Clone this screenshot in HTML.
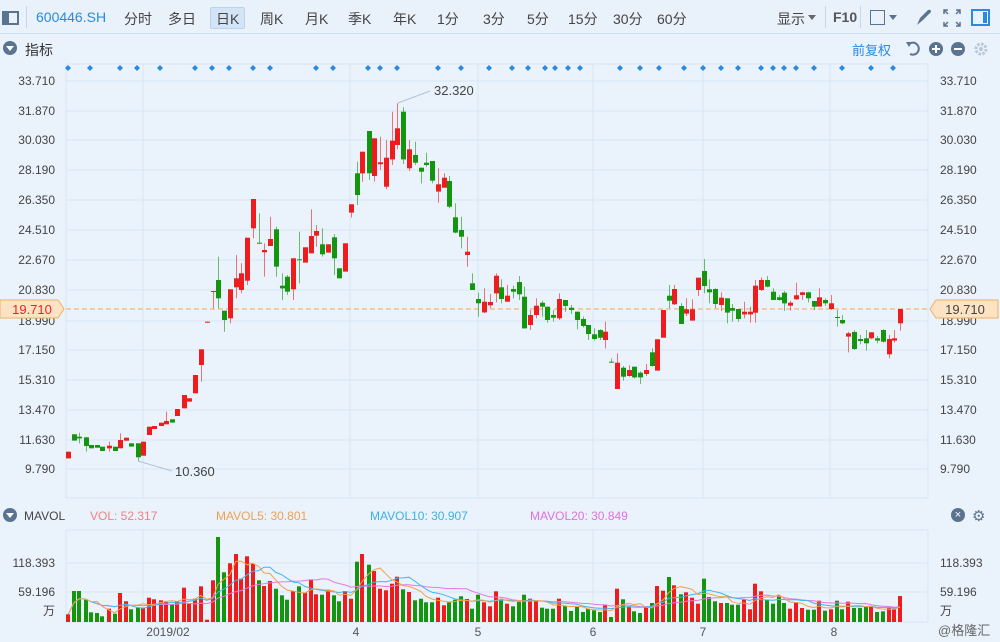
<!DOCTYPE html>
<html><head><meta charset="utf-8"><style>
*{margin:0;padding:0;box-sizing:border-box}
body{width:1000px;height:642px;overflow:hidden;background:#eaf2fc;font-family:"Liberation Sans","Noto Sans CJK SC",sans-serif;position:relative}
.tb{position:absolute;left:0;top:0;width:1000px;height:34px;background:#e9f1fb;border-bottom:1px solid #cfdeef}
.t{position:absolute;top:9px;font-size:14px;color:#444}
.s{position:absolute;font-size:12px;color:#444}
</style></head><body>
<div class="tb">
<div style="position:absolute;left:2px;top:11px;width:17px;height:14px;border:2px solid #5a7390;"><div style="width:5px;height:100%;background:#5a7390"></div></div>
<div style="position:absolute;left:26px;top:6px;width:1px;height:22px;background:#c8d6e6"></div>
<div class="t" style="left:36px;color:#2a8ae0">600446.SH</div>
<div class="t" style="left:124px">分时</div>
<div class="t" style="left:168px">多日</div>
<div style="position:absolute;left:210px;top:7px;width:35px;height:22px;background:#d3e4f6;border:1px solid #bcd2ea;border-radius:2px"></div>
<div class="t" style="left:216px">日K</div>
<div class="t" style="left:260px">周K</div>
<div class="t" style="left:305px">月K</div>
<div class="t" style="left:348px">季K</div>
<div class="t" style="left:393px">年K</div>
<div class="t" style="left:437px">1分</div>
<div class="t" style="left:483px">3分</div>
<div class="t" style="left:527px">5分</div>
<div class="t" style="left:568px">15分</div>
<div class="t" style="left:613px">30分</div>
<div class="t" style="left:657px">60分</div>
<div class="t" style="left:777px">显示</div>
<div style="position:absolute;left:808px;top:15px;border:4px solid transparent;border-top:5px solid #666"></div>
<div style="position:absolute;left:825px;top:6px;width:1px;height:22px;background:#c8d6e6"></div>
<div class="t" style="left:833px;font-weight:bold;color:#555">F10</div>
<div style="position:absolute;left:860px;top:6px;width:1px;height:22px;background:#c8d6e6"></div>
<div style="position:absolute;left:870px;top:10px;width:15px;height:15px;border:1px solid #5a7390"></div>
<div style="position:absolute;left:889px;top:15px;border:4px solid transparent;border-top:5px solid #5a7390"></div>
<svg style="position:absolute;left:915px;top:8px" width="18" height="18"><path d="M2 17 L5 10 L13 2 Q16 1 16 4 L8 12 Z" fill="#5a7390"/></svg>
<svg style="position:absolute;left:943px;top:9px" width="18" height="18" fill="none" stroke="#5a7390" stroke-width="1.5"><path d="M1 5V1H5M13 1H17V5M17 13V17H13M5 17H1V13M1 1L5 5M17 1L13 5M17 17L13 13M1 17L5 13"/></svg>
<div style="position:absolute;left:971px;top:9px;width:19px;height:17px;border:2px solid #2a8ae0"><div style="position:absolute;right:1px;top:1px;width:4px;height:11px;background:#2a8ae0"></div></div>
</div>
<div style="position:absolute;left:3px;top:41px;width:14px;height:14px;border-radius:50%;background:#5a7390"><div style="position:absolute;left:3px;top:5px;border:4px solid transparent;border-top:5px solid #fff"></div></div>
<div class="s" style="left:25px;top:40px;font-size:14px;color:#333">指标</div>
<div class="s" style="left:852px;top:40px;font-size:13px;color:#2a8ae0">前复权</div>
<svg style="position:absolute;left:905px;top:40px" width="90" height="18">
<path d="M4 4 A6 6 0 1 1 5 14" fill="none" stroke="#5a7390" stroke-width="2"/><path d="M1 2 L7 2 L4 7Z" fill="#5a7390"/>
<circle cx="31" cy="9" r="7" fill="#5a7390"/><path d="M27 9H35M31 5V13" stroke="#fff" stroke-width="2"/>
<circle cx="53" cy="9" r="7" fill="#5a7390"/><path d="M49 9H57" stroke="#fff" stroke-width="2"/>
<circle cx="76" cy="9" r="5" fill="none" stroke="#b8c8da" stroke-width="3" stroke-dasharray="2.5 1.4"/><circle cx="76" cy="9" r="2" fill="#b8c8da"/>
</svg>
<svg id="c" style="position:absolute;left:0;top:0" width="1000" height="642"></svg>
<div class="s" style="left:24px;top:509px;font-size:12px;color:#444">MAVOL</div>
<div style="position:absolute;left:3px;top:508px;width:14px;height:14px;border-radius:50%;background:#5a7390"><div style="position:absolute;left:3px;top:5px;border:4px solid transparent;border-top:5px solid #fff"></div></div>
<div class="s" style="left:90px;top:509px;color:#f08080">VOL: 52.317</div>
<div class="s" style="left:216px;top:509px;color:#f0a050">MAVOL5: 30.801</div>
<div class="s" style="left:370px;top:509px;color:#3cb0e8">MAVOL10: 30.907</div>
<div class="s" style="left:530px;top:509px;color:#e070e0">MAVOL20: 30.849</div>
<div style="position:absolute;left:951px;top:508px;width:14px;height:14px;border-radius:50%;background:#5a7390;color:#fff;font-size:11px;line-height:14px;text-align:center">×</div>
<div style="position:absolute;left:972px;top:507px;font-size:15px;color:#5a7390">⚙</div>
<div class="s" style="left:938px;top:620px;color:#666;font-size:13px">@格隆汇</div>
<script>
var s=document.getElementById('c'),h='';
function L(x1,y1,x2,y2,c,w,d){h+='<line x1="'+x1+'" y1="'+y1+'" x2="'+x2+'" y2="'+y2+'" stroke="'+c+'" stroke-width="'+(w||1)+'"'+(d?' stroke-dasharray="'+d+'"':'')+'/>';}
function T(x,y,t,c,a,f){h+='<text x="'+x+'" y="'+y+'" fill="'+(c||'#444')+'" font-size="'+(f||12)+'" text-anchor="'+(a||'start')+'" font-family="Liberation Sans,Noto Sans CJK SC,sans-serif">'+t+'</text>';}
// grid
var py=[81,111,140,170,200,230,260,290,321,350,380,410,440,469],pl=['33.710','31.870','30.030','28.190','26.350','24.510','22.670','20.830','18.990','17.150','15.310','13.470','11.630','9.790'];
L(66,64,928,64,'#d8e6f5');
py.forEach(function(y,i){L(66,y,928,y,'#d6e5f5');T(55,y+4,pl[i],'#444','end');T(940,y+4,pl[i]);});
L(66,498,928,498,'#d6e5f5');
[66,143,350,478,593,703,830,928].forEach(function(x){L(x,64,x,498,'#d6e5f5');L(x,530,x,622,'#d6e5f5');});
[563,592,622].forEach(function(y){L(66,y,928,y,'#d6e5f5')});
L(66,530,928,530,'#d6e5f5');
T(55,567,'118.393','#444','end');T(55,596,'59.196','#444','end');T(55,615,'万','#444','end');
T(940,567,'118.393');T(940,596,'59.196');T(940,615,'万');
[[168,'2019/02'],[356,'4'],[478,'5'],[593,'6'],[703,'7'],[834,'8']].forEach(function(a){T(a[0],636,a[1],'#555','middle')});
// dots
[68,90,120,137,160,195,212,229,253,270,316,333,368,380,397,438,461,489,512,528,545,555,568,580,620,640,659,684,703,721,738,761,773,784,796,814,842,871,893].forEach(function(x){h+='<path d="M'+x+' 65l3 3-3 3-3-3z" fill="#2a8ae0"/>';});
// candles
var A=[[25,'R',1085,1105],[42,'G',1033,1052],[58,'G',1040,1045,1028,1060],[77,'G',1042,1068,1042,1085],[93,'G',1065,1075],[111,'G',1065,1073],[127,'G',1070,1083],[146,'R',1067,1075,1055,1085],[164,'G',1070,1083],[180,'R',1050,1075,1030,1075],[198,'R',1043,1052],[214,'G',1060,1070],[233,'G',1060,1102,1060,1115],[249,'R',1055,1097],[267,'R',1010,1035],[283,'R',1008,1017],[302,'R',998,1008],[318,'R',993,1003,965,1003],[336,'G',988,998],[352,'R',957,978],[371,'R',915,955],[386,'R',925,935],[405,'R',855,910],[422,'R',778,825,778,875],[440,'R',695,698],[458,'R',603,605,603,655],[474,'G',570,625,500,655],[492,'G',662,690,662,725],[510,'R',598,685,598,700],[527,'R',565,592,495,625],[543,'R',550,600,520,610],[562,'R',443,572,443,585],[578,'R',327,415,327,445],[596,'G',458,461,370,461],[612,'R',480,487,460,560],[630,'R',447,468,380,468],[647,'G',418,530,410,560],[665,'G',587,595,550,630],[682,'G',560,605,555,615],[700,'R',505,598,505,630],[717,'G',508,511,425,580],[735,'R',472,518],[752,'R',438,490,358,490],[769,'R',423,437,405,470],[787,'G',463,493,415,500],[804,'R',463,488],[822,'G',442,505,432,555],[838,'G',535,565],[856,'R',460,545],[873,'R',343,368,343,383],[890,'G',250,315,215,345],[907,'R',185,250,185,275],[926,'G',123,250,123,270],[941,'R',145,258,145,275],[960,'R',217,223,140,240],[977,'R',203,290,150,298],[995,'R',152,208,65,225],[1012,'R',115,165,40,178],[1029,'G',65,208,52,222],[1047,'R',178,235,150,243],[1064,'G',195,218,155,225],[1082,'G',233,245,233,280],[1099,'G',218,225,188,230],[1117,'G',213,272,213,280],[1133,'R',283,305,235,338],[1151,'R',263,293,250,293],[1167,'G',273,350,258,355],[1185,'G',382,428,340,430],[1203,'G',420,440,380,475],[1220,'R',485,495,440,530]];
var B=[[5,'G',130,150,100,150],[25,'G',177,190,158,230],[41,'R',185,217,145,220],[59,'R',186,196,162,205],[77,'R',107,160,100,187],[94,'G',142,177,118,190],[112,'R',167,185,135,185],[129,'G',147,155,137,175],[147,'G',126,163,108,180],[163,'G',170,265,140,265],[181,'R',225,255,210,270],[198,'R',197,225,175,235],[216,'G',188,200,182,230],[232,'G',200,240,200,248],[250,'G',225,233,210,245],[266,'R',177,235,160,240],[285,'G',180,198,180,215],[302,'G',203,210,195,222],[320,'G',215,240,215,268],[338,'G',237,258,230,262],[354,'G',255,282,255,300],[372,'G',283,297,265,302],[389,'G',270,293,268,300],[406,'R',275,300,245,325],[422,'G',365,368,355,368],[441,'R',368,447,340,447],[458,'G',383,410,378,422],[476,'R',390,408,376,410],[492,'G',380,412,380,415],[511,'G',398,412,394,432],[527,'R',390,402,372,408],[545,'G',337,378,325,380],[561,'R',298,392],[580,'R',210,293],[596,'G',167,182,135,205],[613,'R',147,193,135,195],[632,'G',198,252,190,252],[649,'R',208,221,175,228],[666,'R',208,242,178,242],[684,'R',113,150,113,168],[702,'G',93,138,57,160],[718,'G',148,157,118,190],[736,'G',147,192,145,205],[752,'R',173,195,157,213],[770,'G',175,218,175,250],[787,'G',204,212,192,245],[805,'G',207,237,207,245],[822,'R',215,223,185,235],[839,'R',215,223,200,248],[856,'R',137,218,120,248],[874,'R',120,150,112,153],[892,'G',120,140,108,142],[908,'G',155,180,145,180],[926,'G',172,180,165,182],[943,'G',158,190,153,213],[961,'R',188,197,183,212],[978,'R',166,178,128,180],[996,'R',157,165,155,180],[1013,'G',157,175,155,187],[1031,'G',183,200,183,210],[1047,'R',172,200,145,200],[1065,'G',180,190,175,198],[1082,'R',190,207,165,210],[1100,'G',231,233,210,260],[1116,'G',240,250,225,253],[1134,'R',280,290,275,337],[1151,'G',276,327,270,330],[1169,'G',297,303,285,313],[1187,'G',295,310,270,332],[1204,'R',277,295,277,298],[1222,'G',295,302,288,310],[1238,'G',270,305,268,308],[1256,'R',297,343,285,355],[1273,'R',295,302,270,308],[1290,'R',207,250,207,272]];
var C=[];
A.forEach(function(a){C.push([60+a[0]/3,a[1],90+a[2]/3,90+a[3]/3,90+(a[4]||a[2])/3,90+(a[5]||a[3])/3])});
B.forEach(function(a){C.push([470+a[0]/3,a[1],240+a[2]/3,240+a[3]/3,240+(a[4]||a[2])/3,240+(a[5]||a[3])/3])});
// dashed current price
L(66,309,928,309,'#f0c090',1.5,'5 3');
C.forEach(function(c){var col=c[1]=='R'?'#ee1c1c':'#13950f';var x=Math.round(c[0]);
h+='<rect x="'+(x)+'" y="'+c[4].toFixed(1)+'" width="1" height="'+(c[5]-c[4]).toFixed(1)+'" fill="'+col+'" opacity="0.6"/>';
h+='<rect x="'+(x-2)+'" y="'+c[2].toFixed(1)+'" width="5" height="'+Math.max(1,c[3]-c[2]).toFixed(1)+'" fill="'+col+'"/>';});
// annotations
L(398,103,430,91,'#b0c4da');T(434,95,'32.320','#444','start',13);
L(138,461,172,471,'#b0c4da');T(175,476,'10.360','#444','start',13);
// price tags
h+='<path d="M0 300H58L64 309L58 318H0Z" fill="#fde3c4" stroke="#f0b060"/>';T(32,314,'19.710','#ee2222','middle',13);
h+='<path d="M998 300H936L930 309L936 318H998Z" fill="#fde3c4" stroke="#f0b060"/>';T(965,314,'19.710','#444','middle',13);
// volume
var V1=[357,287,287,313,351,353,363,340,355,293,318,342,337,337,307,312,315,320,327,318,277,325,310,273,373,255,125,231,204,176,250,183,205,255,272,257,280,300,313,287,273,292,254,297,298,283,300,318,287,310,199,176,208,227,280,285,265,244,282,290,315,310,321,321,307,330,321,313,303,311];
var V2=[340,298,321,333,288,312,325,333,320,298,310,318,337,340,340,310,332,347,335,350,340,345,350,330,365,280,312,333,348,353,333,323,272,286,245,270,297,291,307,325,250,305,318,323,323,328,328,313,342,265,288,313,325,300,323,340,320,338,343,343,316,346,342,316,342,319,338,338,335,335,350,348,338,340,302];
var V=[];V1.forEach(function(t){V.push((380-t)/3)});V2.forEach(function(t){V.push((380-t)/3)});
var n=Math.min(V.length,C.length);
for(var i=0;i<n;i++){var c=C[i],col=c[1]=='R'?'#ee1c1c':'#13950f';h+='<rect x="'+(Math.round(c[0])-2)+'" y="'+(622-V[i]).toFixed(1)+'" width="4" height="'+V[i].toFixed(1)+'" fill="'+col+'"/>';}
function ma(p,col){var d='';for(var i=0;i<n;i++){var k=Math.min(p,i+1),s=0;for(var j=i-k+1;j<=i;j++)s+=V[j];d+=(i?'L':'M')+C[i][0].toFixed(1)+' '+(622-s/k).toFixed(1);}h+='<path d="'+d+'" fill="none" stroke="'+col+'" stroke-width="1"/>';}
ma(20,'#e878e0');ma(10,'#3cb8f0');ma(5,'#f5a04a');
s.innerHTML=h;
</script>
</body></html>
